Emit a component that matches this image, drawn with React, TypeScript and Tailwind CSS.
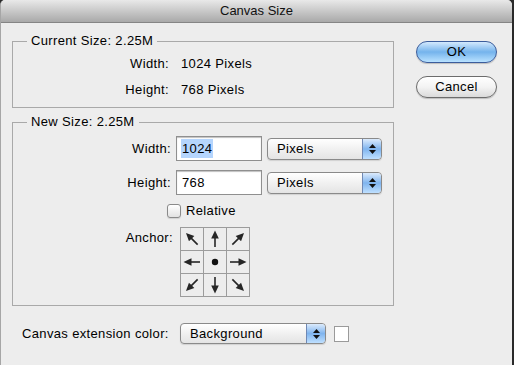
import React from 'react';

const ink = '#262626';

const Arrow: React.FC<{ angle: number }> = ({ angle }) => (
  <svg width="22" height="22" viewBox="0 0 22 22">
    <g transform={`rotate(${angle} 11 11)`}>
      <line x1="11" y1="19" x2="11" y2="9" stroke={ink} strokeWidth="1.6" />
      <polygon points="11,2.5 7.2,10.5 14.8,10.5" fill={ink} />
    </g>
  </svg>
);

const Dot = () => (
  <svg width="22" height="22" viewBox="0 0 22 22">
    <circle cx="11" cy="11" r="3.2" fill="#111" />
  </svg>
);

const Stepper = () => (
  <span className="flex w-[19px] flex-col items-center justify-center gap-[2px] rounded-r-[3px] border-l border-[#6f88b4] bg-linear-to-b from-[#dcebfc] via-[#7fb4ee] to-[#bfe0ff]">
    <svg width="7" height="4" viewBox="0 0 7 4">
      <polygon points="3.5,0 7,4 0,4" fill="#111" />
    </svg>
    <svg width="7" height="4" viewBox="0 0 7 4">
      <polygon points="0,0 7,0 3.5,4" fill="#111" />
    </svg>
  </span>
);

const PopUp: React.FC<{ label: string; className: string }> = ({ label, className }) => (
  <div
    className={`flex overflow-hidden rounded-[4px] border border-[#8a8a8a] bg-linear-to-b from-white via-[#f1f1f1] to-[#e4e4e4] shadow-[0_1px_1px_rgba(0,0,0,0.12)] ${className}`}
  >
    <span className="flex-1 pl-[9px] text-[13px] leading-[20px]">{label}</span>
    <Stepper />
  </div>
);

const TextBox: React.FC<{ value: string; selected?: boolean }> = ({ value, selected }) => (
  <div className="flex h-[25px] w-[86px] items-center border border-[#8f8f8f] bg-white pl-[4px] shadow-[inset_0_1px_1px_rgba(0,0,0,0.25)]">
    <span className={`text-[13px] leading-[19px] px-[1px] ${selected ? 'bg-[#b5d5fd]' : ''}`}>{value}</span>
  </div>
);

export default function App() {
  const arrows: (number | null)[] = [-45, 0, 45, -90, null, 90, -135, 180, 135];

  return (
    <div className="h-[365px] w-[514px] bg-[#2a2a2a] font-['Liberation_Sans',Arial,sans-serif] text-black">
      <div className="flex h-full w-[512px] flex-col overflow-hidden rounded-t-[5px] border-l border-[#a6a6a6] bg-[#ededed]">
        <div className="flex h-[23px] shrink-0 items-center justify-center border-b border-[#858585] bg-linear-to-b from-[#e9e9e9] to-[#a9a9a9] text-[13px] leading-[16px] text-[#111]">
          Canvas Size
        </div>

        <div className="flex pl-[11px] tracking-[0.35px]">
          <div className="flex w-[382px] flex-col pt-[10px]">
            <fieldset className="border border-[#a9a9a9] pb-[9px]">
              <legend className="ml-[14px] px-[4px] text-[13px] leading-[16px]">Current Size: 2.25M</legend>
              <div className="mt-[7px] flex text-[13px] leading-[16px]">
                <span className="w-[156px] text-right">Width:</span>
                <span className="ml-[12px]">1024 Pixels</span>
              </div>
              <div className="mt-[10px] flex text-[13px] leading-[16px]">
                <span className="w-[156px] text-right">Height:</span>
                <span className="ml-[12px]">768 Pixels</span>
              </div>
            </fieldset>

            <fieldset className="mt-[6px] border border-[#a9a9a9] pb-[8px]">
              <legend className="ml-[14px] px-[4px] text-[13px] leading-[16px]">New Size: 2.25M</legend>
              <div className="mt-[6px] flex items-center">
                <span className="w-[158px] text-right text-[13px]">Width:</span>
                <div className="ml-[5px]">
                  <TextBox value="1024" selected />
                </div>
                <PopUp label="Pixels" className="ml-[5px] h-[22px] w-[115px]" />
              </div>
              <div className="mt-[9px] flex items-center">
                <span className="w-[158px] text-right text-[13px]">Height:</span>
                <div className="ml-[5px]">
                  <TextBox value="768" />
                </div>
                <PopUp label="Pixels" className="ml-[5px] h-[22px] w-[115px]" />
              </div>
              <div className="mt-[9px] flex items-center pl-[154px]">
                <span className="h-[14px] w-[14px] rounded-[3px] border border-[#8a8a8a] bg-linear-to-b from-white to-[#e2e2e2] shadow-[0_1px_1px_rgba(0,0,0,0.12)]" />
                <span className="ml-[5px] text-[13px] leading-[14px]">Relative</span>
              </div>
              <div className="mt-[9px] flex items-start">
                <span className="mt-[3px] w-[160px] text-right text-[13px] leading-[16px]">Anchor:</span>
                <div className="ml-[7px] grid grid-cols-3 gap-px bg-[#9c9c9c] p-px">
                  {arrows.map((a, i) => (
                    <div key={i} className="h-[22px] w-[22px] bg-[#ededed]">
                      {a === null ? <Dot /> : <Arrow angle={a} />}
                    </div>
                  ))}
                </div>
              </div>
            </fieldset>

            <div className="mt-[17px] flex items-center">
              <span className="ml-[10px] w-[147px] text-[13px] leading-[16px]">Canvas extension color:</span>
              <PopUp label="Background" className="ml-[11px] h-[21px] w-[146px]" />
              <span className="ml-[8px] h-[16px] w-[15px] border border-[#9a9a9a] bg-white" />
            </div>
          </div>

          <div className="ml-[22px] flex flex-col pt-[18px]">
            <button className="flex h-[22px] w-[81px] items-center justify-center rounded-full border border-[#3c5d9c] bg-linear-to-b from-[#d3e9fd] via-[#74b3ec] to-[#b9e2ff] text-[13px] leading-[16px] shadow-[0_1px_1px_rgba(0,0,0,0.2)]">
              OK
            </button>
            <button className="mt-[13px] flex h-[22px] w-[81px] items-center justify-center rounded-full border border-[#6c6c6c] bg-linear-to-b from-white via-[#f3f3f3] to-[#dadada] text-[13px] leading-[16px] shadow-[0_1px_1px_rgba(0,0,0,0.2)]">
              Cancel
            </button>
          </div>
        </div>
      </div>
    </div>
  );
}
